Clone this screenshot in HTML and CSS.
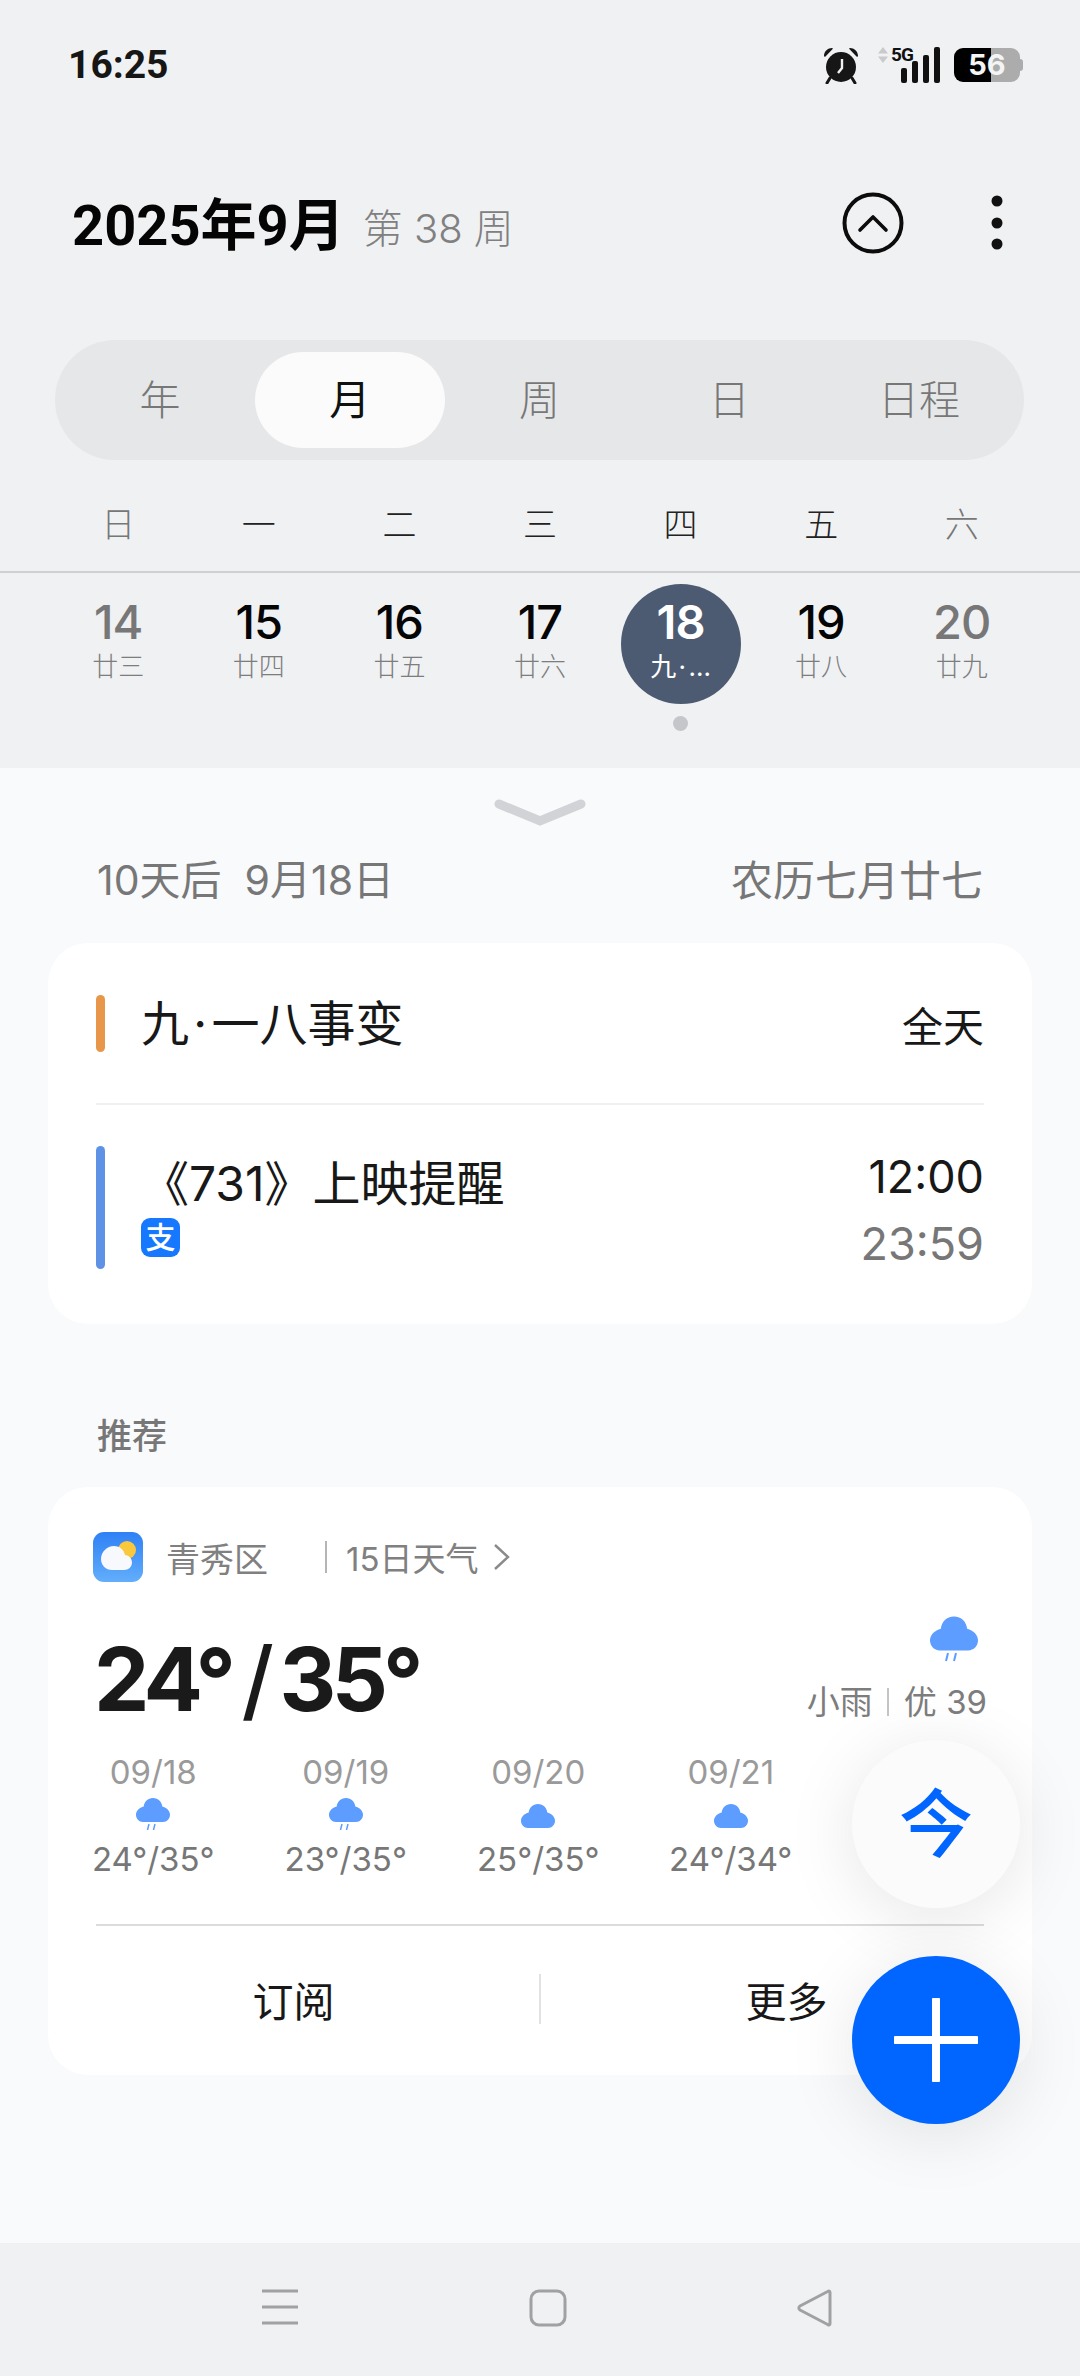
FILE: index.html
```html
<!DOCTYPE html>
<html lang="zh-CN">
<head>
<meta charset="utf-8">
<title>日历</title>
<link rel="stylesheet" href="styles.css">
</head>
<body>
<svg class="defs" width="0" height="0" aria-hidden="true">
  <symbol id="cloud" viewBox="0 0 34 24">
    <path d="M17 0c5.200 0 8.800 3.800 9.300 8.600 4.300 1 7.700 4.500 7.700 8.200 0 4-3 7.200-7 7.200H7c-4 0-7-3.200-7-7.200 0-3.700 3.400-7.200 7.700-8.200C8.200 3.800 11.800 0 17 0z" fill="#5c9dff"/>
  </symbol>
</svg>
<div class="page">
  <div class="status">
    <span class="clock">16:25</span>
    <div class="status-icons">
      <svg class="alarm" width="38" height="38" viewBox="0 0 38 38">
        <circle cx="19" cy="21" r="15" fill="#161616"/>
        <path d="M2 10c0-5 4-8 8-8 .8 0 1 .7.400 1.200L3.500 10.500c-.6.600-1.500.3-1.500-.5zM36 10c0-5-4-8-8-8-.8 0-1 .7-.4 1.200l6.900 7.300c.6.600 1.500.3 1.500-.5z" fill="#161616"/>
        <path d="M8 32l-3 5M30 32l3 5" stroke="#161616" stroke-width="3" stroke-linecap="round"/>
        <path d="M20 13v9l-4 5" stroke="#f0f1f3" stroke-width="2.400" fill="none"/>
      </svg>
      <div class="net">
        <svg class="updown" width="10" height="16" viewBox="0 0 10 16"><path d="M5 0l5 6.500H0zM0 9.500h10L5 16z" fill="#c9cacc"/></svg>
        <span class="net-g">5G</span>
        <svg class="bars" width="40" height="36" viewBox="0 0 40 36">
          <rect x="0" y="21" width="6" height="15" rx="2" fill="#111"/>
          <rect x="11" y="14" width="6" height="22" rx="2" fill="#111"/>
          <rect x="22" y="8" width="6" height="28" rx="2" fill="#111"/>
          <rect x="33" y="0" width="6" height="36" rx="2" fill="#111"/>
        </svg>
      </div>
      <div class="battery"><span class="batt-num">56</span></div>
    </div>
  </div>

  <header class="head">
    <div class="head-title">
      <h1>2025年9月</h1>
      <span class="week">第 38 周</span>
    </div>
    <div class="head-actions">
      <svg width="62" height="62" viewBox="0 0 62 62"><circle cx="31" cy="31" r="28.500" fill="none" stroke="#0c0c0c" stroke-width="4"/><path d="M18 38l13-13 13 13" fill="none" stroke="#0c0c0c" stroke-width="3.600" stroke-linecap="round" stroke-linejoin="round"/></svg>
      <svg width="14" height="58" viewBox="0 0 14 58"><circle cx="7" cy="7" r="5.500" fill="#111"/><circle cx="7" cy="29" r="5.500" fill="#111"/><circle cx="7" cy="50" r="5.500" fill="#111"/></svg>
    </div>
  </header>

  <nav class="seg">
    <span class="seg-item">年</span>
    <span class="seg-item seg-on">月</span>
    <span class="seg-item">周</span>
    <span class="seg-item">日</span>
    <span class="seg-item">日程</span>
  </nav>

  <div class="weekdays">
    <span class="dim">日</span><span>一</span><span>二</span><span>三</span><span>四</span><span>五</span><span class="dim">六</span>
  </div>

  <div class="dates">
    <div class="day dim"><b>14</b><i>廿三</i></div>
    <div class="day"><b>15</b><i>廿四</i></div>
    <div class="day"><b>16</b><i>廿五</i></div>
    <div class="day"><b>17</b><i>廿六</i></div>
    <div class="day-wrap">
      <div class="day today"><b>18</b><i>九&#8202;·&#8202;...</i></div>
      <span class="event-dot"></span>
    </div>
    <div class="day"><b>19</b><i>廿八</i></div>
    <div class="day dim"><b>20</b><i>廿九</i></div>
  </div>

  <main class="panel">
    <svg class="handle" width="92" height="30" viewBox="0 0 92 30"><path d="M5 6l41 17 41-17" fill="none" stroke="#d2d3d6" stroke-width="9" stroke-linecap="round" stroke-linejoin="miter"/></svg>

    <div class="date-line">
      <span>10天后&nbsp;&nbsp;9月18日</span>
      <span class="lunar">农历七月廿七</span>
    </div>

    <section class="card events">
      <div class="event event-a">
        <span class="bar bar-orange"></span>
        <span class="event-title">九&#8202;·&#8202;一八事变</span>
        <span class="event-allday">全天</span>
      </div>
      <div class="rule"></div>
      <div class="event event-b">
        <span class="bar bar-blue"></span>
        <div class="event-main">
          <span class="event-title film">《731》上映提醒</span>
          <span class="alipay">支</span>
        </div>
        <div class="event-times">
          <span class="t-start">12:00</span>
          <span class="t-end">23:59</span>
        </div>
      </div>
    </section>

    <h2 class="rec">推荐</h2>

    <section class="card weather">
      <div class="w-top">
        <svg class="w-app" width="50" height="50" viewBox="0 0 50 50">
          <defs><linearGradient id="wg" x1="0" y1="0" x2="0" y2="1"><stop offset="0" stop-color="#2f80f5"/><stop offset="1" stop-color="#62aefc"/></linearGradient></defs>
          <rect width="50" height="50" rx="11" fill="url(#wg)"/>
          <circle cx="34" cy="18" r="9" fill="#f9c83c"/>
          <path d="M21 14c6 0 10 4 11 9 4 .5 7 3.500 7 7.500 0 4.500-3.500 7.500-8 7.500H19c-6 0-11-4.500-11-11 0-7 6-13 13-13z" fill="#f7f9fc"/>
        </svg>
        <span class="w-city">青秀区</span>
        <span class="w-sep"></span>
        <span class="w-15">15日天气</span>
        <svg class="w-chev" width="18" height="28" viewBox="0 0 18 28"><path d="M2 2l13 12L2 26" fill="none" stroke="#8a8a8a" stroke-width="2.400"/></svg>
      </div>

      <div class="w-now">
        <div class="w-temp">24°<span class="w-slash">/</span>35°</div>
        <div class="w-side">
          <svg class="w-big" width="48" height="46" viewBox="0 0 48 46">
            <use href="#cloud" width="48" height="35"/>
            <path d="M18 37l-2 8M26 37l-2 8" stroke="#5c9dff" stroke-width="2"/>
          </svg>
          <div class="w-cond"><span>小雨</span><span class="w-sep2"></span><span>优 39</span></div>
        </div>
      </div>

      <div class="forecast">
        <div class="fc">
          <span class="fc-date">09/18</span>
          <svg class="fc-ico" width="34" height="32" viewBox="0 0 34 32"><use href="#cloud" width="34" height="24"/><path d="M13 26l-1.500 6M19 26l-1.500 6" stroke="#5c9dff" stroke-width="1.500"/></svg>
          <span class="fc-temp">24°/35°</span>
        </div>
        <div class="fc">
          <span class="fc-date">09/19</span>
          <svg class="fc-ico" width="34" height="32" viewBox="0 0 34 32"><use href="#cloud" width="34" height="24"/><path d="M13 26l-1.500 6M19 26l-1.500 6" stroke="#5c9dff" stroke-width="1.500"/></svg>
          <span class="fc-temp">23°/35°</span>
        </div>
        <div class="fc">
          <span class="fc-date">09/20</span>
          <svg class="fc-ico" width="34" height="32" viewBox="0 0 34 32"><use href="#cloud" y="6" width="34" height="24"/></svg>
          <span class="fc-temp">25°/35°</span>
        </div>
        <div class="fc">
          <span class="fc-date">09/21</span>
          <svg class="fc-ico" width="34" height="32" viewBox="0 0 34 32"><use href="#cloud" y="6" width="34" height="24"/></svg>
          <span class="fc-temp">24°/34°</span>
        </div>
      </div>

      <div class="rule rule-w"></div>

      <div class="w-actions">
        <span class="w-act">订阅</span>
        <span class="w-vsep"></span>
        <span class="w-act">更多</span>
      </div>
    </section>

    <button class="fab fab-today"><span class="fab-char">今</span></button>
    <button class="fab fab-add" aria-label="新建"><svg width="84" height="84" viewBox="0 0 84 84"><path d="M42 2v80" stroke="#fff" stroke-width="8" stroke-linecap="round"/><path d="M2 42h80" stroke="#fff" stroke-width="8" stroke-linecap="round"/></svg></button>
  </main>

  <footer class="navbar">
    <svg width="38" height="36" viewBox="0 0 38 36"><path d="M1 2h36M1 18h36M1 34h36" stroke="#a0a1a3" stroke-width="3"/></svg>
    <svg width="38" height="38" viewBox="0 0 38 38"><rect x="2" y="2" width="34" height="34" rx="8" fill="none" stroke="#a0a1a3" stroke-width="3"/></svg>
    <svg width="38" height="38" viewBox="0 0 38 38"><path d="M34 3.500v31c0 1.500-1 2-2.300 1L4 21c-1.500-1-1.500-3 0-4L31.700 2.500C33 1.700 34 2 34 3.500z" fill="none" stroke="#a0a1a3" stroke-width="3" stroke-linejoin="round"/></svg>
  </footer>
</div>
</body>
</html>
```
FILE: styles.css
```css
* { box-sizing: border-box; }
html, body { margin: 0; padding: 0; }
body {
  font-family: Inter, "Noto Sans CJK SC", sans-serif;
  background: #f0f1f3;
  color: #111;
}
.defs { position: absolute; }
.page {
  width: 1080px;
  height: 2376px;
  display: flex;
  flex-direction: column;
  overflow: hidden;
}

/* status bar */
.status {
  height: 124px;
  padding: 5px 60px 0 68px;
  display: flex;
  align-items: center;
  justify-content: space-between;
}
.clock { font-family: Roboto, sans-serif; font-size: 39px; font-weight: 700; color: #161616; }
.status-icons { display: flex; align-items: center; height: 40px; }
.alarm { margin-right: 18px; }
.net { position: relative; width: 62px; height: 36px; margin-right: 14px; }
.updown { position: absolute; left: 0; top: 0; }
.net-g {
  position: absolute; left: 13px; top: -3px;
  font-family: Roboto, sans-serif;
  font-size: 19px; font-weight: 700; line-height: 22px; letter-spacing: -1px;
}
.bars { position: absolute; left: 23px; top: 0; }
.battery {
  width: 66px; height: 34px;
  border-radius: 9px;
  background: linear-gradient(90deg, #000 0 56%, #acacac 56% 100%);
  display: flex; align-items: center; justify-content: center;
  position: relative;
}
.battery::after {
  content: ""; position: absolute; right: -3px; top: 11px;
  width: 3px; height: 12px; background: #acacac; border-radius: 0 3px 3px 0;
}
.batt-num { font-size: 29px; font-weight: 700; color: #f4f4f4; line-height: 34px; }

/* header */
.head {
  height: 100px;
  margin: 49px 0 67px;
  padding: 0 76px 0 72px;
  display: flex;
  align-items: center;
  justify-content: space-between;
}
.head-title { display: flex; align-items: center; }
.head-title h1 { margin: 6px 0 0; font-family: Roboto, "Noto Sans CJK SC", sans-serif; font-size: 56px; font-weight: 700; color: #050505; line-height: 70px; }
.week { font-size: 40px; color: #808080; margin-left: 18px; margin-top: 6px; font-weight: 300; }
.head-actions { display: flex; align-items: center; gap: 86px; }

/* segmented control */
.seg {
  height: 120px;
  margin: 0 56px 0 55px;
  padding: 12px 10px;
  background: #e6e7e9;
  border-radius: 60px;
  display: grid;
  grid-template-columns: repeat(5, 1fr);
}
.seg-item {
  display: flex; align-items: center; justify-content: center;
  font-size: 41px; color: #777;
  border-radius: 48px;
  font-weight: 300;
  padding-bottom: 6px;
}
.seg-on { background: #fbfbfb; color: #111; font-weight: 400; }

/* weekdays */
.weekdays {
  height: 113px;
  padding: 41px 48px 0;
  display: grid;
  grid-template-columns: repeat(7, 1fr);
  justify-items: center;
  font-size: 34px;
  line-height: 48px;
  color: #222;
  font-weight: 300;
  border-bottom: 2px solid #cfd0d2;
}
.weekdays .dim { color: #777; }

/* dates */
.dates {
  height: 195px;
  padding: 11px 48px 0;
  display: grid;
  grid-template-columns: repeat(7, 1fr);
  justify-items: center;
  align-items: start;
}
.day-wrap { display: flex; flex-direction: column; align-items: center; }
.day {
  width: 120px; height: 120px;
  padding-top: 14px;
  display: flex; flex-direction: column; align-items: center;
  border-radius: 50%;
}
.day b { font-size: 47px; line-height: 48px; font-weight: 500; color: #050505; letter-spacing: -1px; }
.day i { font-style: normal; font-size: 26px; line-height: 30px; margin-top: 6px; color: #7d7d7d; font-weight: 300; }
.day.dim b { color: #777; }
.today { background: #4d5b72; }
.today b, .today i { color: #fff; font-weight: 600; }
.today i { font-weight: 400; }
.event-dot { width: 15px; height: 15px; margin-top: 12px; border-radius: 50%; background: #c4c6c9; }

/* bottom sheet */
.panel {
  flex: 1;
  position: relative;
  background: #f9fafc;
  padding: 30px 48px 0;
  display: flex;
  flex-direction: column;
}
.handle { align-self: center; display: block; flex: none; }
.date-line {
  margin-top: 25px;
  height: 48px;
  padding: 0 49px;
  display: flex;
  justify-content: space-between;
  align-items: center;
  font-size: 41px;
  color: #777;
  font-weight: 400;
}
.lunar { font-size: 42px; }
.card { background: #fff; border-radius: 40px; flex: none; }

.events { margin-top: 42px; height: 381px; padding: 52px 48px 0; }
.event { display: flex; align-items: flex-start; position: relative; }
.bar { width: 9px; border-radius: 5px; flex: none; }
.bar-orange { height: 57px; background: #e8964a; }
.bar-blue { height: 123px; background: #5e92e6; }
.event-a { height: 57px; align-items: center; }
.event-title { font-size: 48px; line-height: 60px; color: #181818; margin-left: 36px; }
.event-allday { margin-left: auto; font-size: 41px; color: #181818; }
.rule { height: 2px; background: #f0f0f1; margin-top: 51px; }
.event-b { margin-top: 41px; justify-content: space-between; }
.event-main { display: flex; flex-direction: column; align-items: flex-start; margin-left: 36px; flex: 1; }
.film { margin-left: 0; font-size: 48px; line-height: 60px; margin-top: 8px; }
.alipay {
  width: 39px; height: 39px;
  border-radius: 9px;
  background: #1677ff;
  color: #fff;
  font-size: 30px; line-height: 38px;
  text-align: center;
  font-weight: 500;
  margin-top: 4px;
}
.event-times { display: flex; flex-direction: column; align-items: flex-end; margin-top: 1px; }
.t-start { font-size: 45px; line-height: 60px; color: #181818; }
.t-end { font-size: 45px; line-height: 60px; color: #777; margin-top: 7px; }

.rec {
  margin: 87px 0 0 49px;
  height: 50px;
  font-size: 35px;
  line-height: 50px;
  font-weight: 500;
  color: #777;
}

.weather { margin-top: 26px; height: 588px; padding: 45px 48px 0; position: relative; }
.w-top { display: flex; align-items: center; height: 50px; margin-left: -3px; }
.w-app { flex: none; }
.w-city { font-size: 34px; color: #808080; margin-left: 23px; font-weight: 400; }
.w-sep { width: 2px; height: 32px; background: #b5b5b5; margin-left: 57px; }
.w-15 { font-size: 33px; color: #808080; margin-left: 19px; }
.w-chev { margin-left: 15px; }
.w-now { height: 130px; margin-top: 30px; position: relative; display: flex; justify-content: space-between; }
.w-temp { font-size: 88px; font-weight: 700; line-height: 100px; color: #1a1a1a; margin-top: 17px; display: flex; letter-spacing: -4.500px; margin-left: -2px; }
.w-slash { margin: 0 10px; font-weight: 500; }
.w-side { display: flex; flex-direction: column; align-items: flex-end; margin-right: -3px; }
.w-big { margin-right: 9px; margin-top: 4px; }
.w-cond { display: flex; align-items: center; font-size: 33px; color: #7d7d7d; line-height: 48px; margin-top: 16px; }
.w-sep2 { width: 2px; height: 28px; background: #c5c5c5; margin: 0 15px 0 14px; }

.forecast { display: flex; margin: 10px 0 0 -39px; }
.fc { width: 192.5px; display: flex; flex-direction: column; align-items: center; flex: none; }
.fc-date { font-size: 33px; line-height: 40px; color: #9a9a9a; }
.fc-ico { display: block; margin-top: 6px; }
.fc-temp { font-size: 33px; line-height: 44px; color: #777; margin-top: 7px; }

.rule-w { background: #dcdcdc; margin-top: 43px; }
.w-actions { display: flex; align-items: center; justify-content: center; margin: 47px -48px 0; height: 52px; position: relative; }
.w-act { flex: 1; text-align: center; font-size: 41px; color: #181818; }
.w-vsep { width: 2px; height: 50px; background: #e2e2e2; flex: none; }

.fab {
  position: absolute;
  left: 852px;
  width: 168px; height: 168px;
  border: 0; padding: 0;
  border-radius: 50%;
  display: flex; align-items: center; justify-content: center;
  box-shadow: 0 10px 70px rgba(0,0,0,.1);
  font-family: inherit;
}
.fab-today { top: 972px; background: #fbfbfb; color: #0066ff; font-size: 74px; font-weight: 500; padding-bottom: 12px; }
.fab-add { top: 1188px; background: #0066ff; }

/* nav bar */
.navbar {
  height: 133px;
  flex: none;
  background: #f0f1f3;
  position: relative;
  z-index: 1;
  padding: 46px 246px 0 261px;
  display: flex;
  justify-content: space-between;
  align-items: flex-start;
}
```
